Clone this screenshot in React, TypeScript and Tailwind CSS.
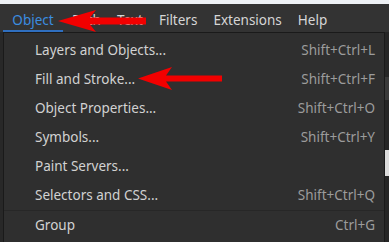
import React from 'react';

const menuBar = ['Path', 'Text', 'Filters', 'Extensions', 'Help'];

const items: { label: string; shortcut?: string; sep?: boolean }[] = [
  { label: 'Layers and Objects...', shortcut: 'Shift+Ctrl+L' },
  { label: 'Fill and Stroke...', shortcut: 'Shift+Ctrl+F' },
  { label: 'Object Properties...', shortcut: 'Shift+Ctrl+O' },
  { label: 'Symbols...', shortcut: 'Shift+Ctrl+Y' },
  { label: 'Paint Servers...' },
  { label: 'Selectors and CSS...', shortcut: 'Shift+Ctrl+Q', sep: true },
  { label: 'Group', shortcut: 'Ctrl+G' },
];

// red annotation arrow pointing left, tip at (0, h/2)
const Arrow = ({ w, h, head, shaft }: { w: number; h: number; head: number; shaft: number }) => {
  const m = h / 2;
  return (
    <svg width={w} height={h} viewBox={`0 0 ${w} ${h}`}>
      <path
        d={`M0 ${m} L${head} 0 L${head - 6} ${m - shaft / 2} L${w} ${m - shaft / 2} L${w} ${m + shaft / 2} L${head - 6} ${m + shaft / 2} L${head} ${h} Z`}
        fill="#f20000"
      />
    </svg>
  );
};

export default function App() {
  return (
    <div
      className="relative w-[389px] h-[242px] overflow-hidden bg-[#262626]"
      style={{ fontFamily: '"Noto Sans", "Open Sans", sans-serif' }}
    >
      <div className="h-[4px] bg-[#eef1f5]" />
      <div className="h-[28px] bg-[#333333] flex items-center pt-[5px] text-[13.5px] text-[#d6d6d6]">
        <div className="relative ml-[3px] w-[60px] h-full flex items-center justify-center text-[#3b8de0]">
          <span>Object</span>
          <div className="absolute left-0 right-0 bottom-0 h-[2px] bg-[#2f6fc0]" />
        </div>
        <div className="flex items-center gap-[16px] ml-[9px]">
          {menuBar.map((m) => (
            <span key={m}>{m}</span>
          ))}
        </div>
      </div>
      <div className="flex h-[210px]">
        <div className="w-[3px] bg-[#282828]" />
        <div className="w-[382px] bg-[#2f2f2f] border border-b-0 border-[#1a1a1a] pt-[3px] text-[13.5px]">
          {items.map((it) => (
            <React.Fragment key={it.label}>
              <div className="h-[29px] flex items-center justify-between pl-[31px] pr-[9px]">
                <span className="text-[#d2d2d2]">{it.label}</span>
                {it.shortcut && <span className="text-[#9c9c9c]">{it.shortcut}</span>}
              </div>
              {it.sep && <div className="h-px bg-[#272727]" />}
            </React.Fragment>
          ))}
        </div>
        <div className="w-[4px] flex flex-col">
          <div className="h-[45px] bg-[#262626]" />
          <div className="h-[23px] bg-[#3a3a3a]" />
          <div className="h-[50px] bg-[#262626]" />
          <div className="h-[26px] bg-[#dcdcdc]" />
          <div className="flex-1 bg-[#262626]" />
        </div>
      </div>
      <div className="absolute left-[58px] top-[10px]">
        <Arrow w={88} h={22} head={38} shaft={7} />
      </div>
      <div className="absolute left-[138px] top-[67px]">
        <Arrow w={84} h={23} head={34} shaft={6} />
      </div>
    </div>
  );
}
